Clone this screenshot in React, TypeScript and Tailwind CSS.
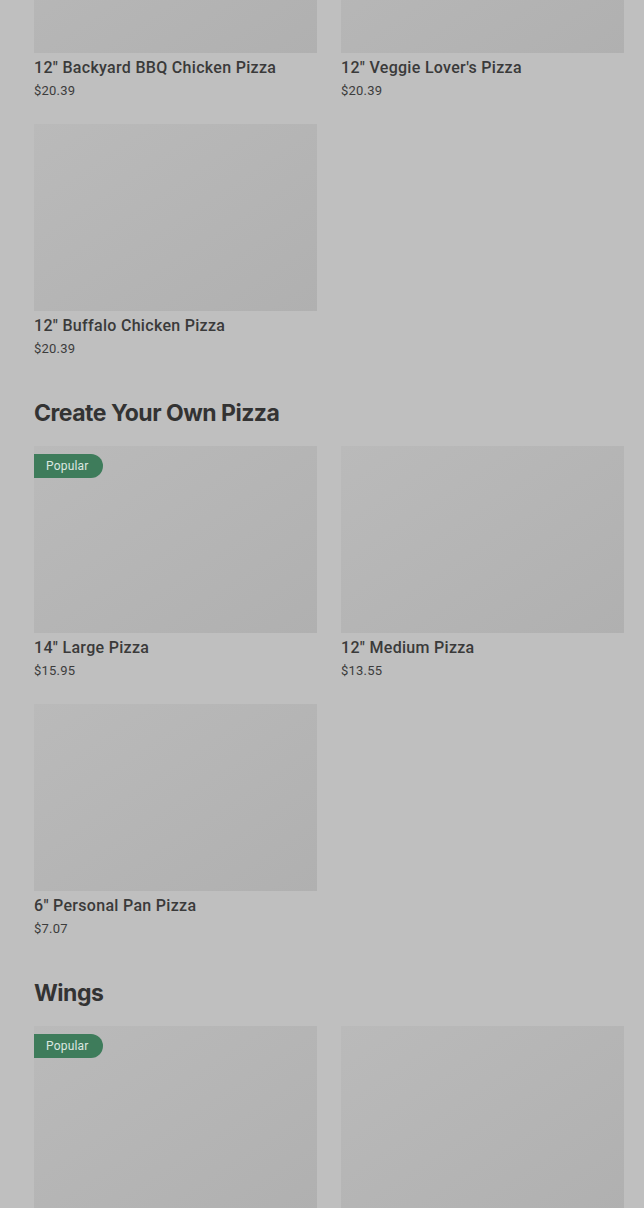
import React from "react";

type Item = { name?: string; price?: string; popular?: boolean };

const Card = ({ item }: { item: Item }) => (
  <div className="flex flex-col">
    <div className="relative h-[187px] w-full bg-gradient-to-br from-[#bababa] to-[#b0b0b0]">
      {item.popular && (
        <span className="absolute left-0 top-[8px] flex h-[24px] items-center rounded-r-full bg-[#3e7c5b] pl-[12px] pr-[14px] text-[12px] leading-none tracking-[0.2px] text-[#dbe7e0]">
          Popular
        </span>
      )}
    </div>
    {item.name && (
      <div className="mt-[4px] text-[16px] leading-[22px] font-medium tracking-[0.3px] text-[#3a3a3a]">{item.name}</div>
    )}
    {item.price && (
      <div className="mt-[2px] text-[13px] leading-[20px] tracking-[0.2px] text-[#3c3c3c]">{item.price}</div>
    )}
  </div>
);

const Section = ({ title, items }: { title?: string; items: Item[] }) => (
  <section className="flex flex-col">
    {title && (
      <h2
        className="mt-[38px] mb-[17px] text-[23px] leading-[32px] font-bold tracking-[-0.5px] text-[#333333]"
        style={{ fontFamily: "Inter, sans-serif" }}
      >
        {title}
      </h2>
    )}
    <div className="grid grid-cols-2 gap-x-[24px] gap-y-[23px]">
      {items.map((it, i) => (
        <Card key={i} item={it} />
      ))}
    </div>
  </section>
);

export default function App() {
  return (
    <div
      className="h-[1208px] w-[644px] overflow-hidden bg-[#bfbfbf]"
      style={{ fontFamily: "Roboto, 'Noto Sans', sans-serif" }}
    >
      <div className="-mt-[134px] pl-[34px] pr-[20px]">
        <Section
          items={[
            { name: '12" Backyard BBQ Chicken Pizza', price: "$20.39" },
            { name: "12\" Veggie Lover's Pizza", price: "$20.39" },
            { name: '12" Buffalo Chicken Pizza', price: "$20.39" },
          ]}
        />
        <Section
          title="Create Your Own Pizza"
          items={[
            { name: '14" Large Pizza', price: "$15.95", popular: true },
            { name: '12" Medium Pizza', price: "$13.55" },
            { name: '6" Personal Pan Pizza', price: "$7.07" },
          ]}
        />
        <Section title="Wings" items={[{ popular: true }, {}]} />
      </div>
    </div>
  );
}
